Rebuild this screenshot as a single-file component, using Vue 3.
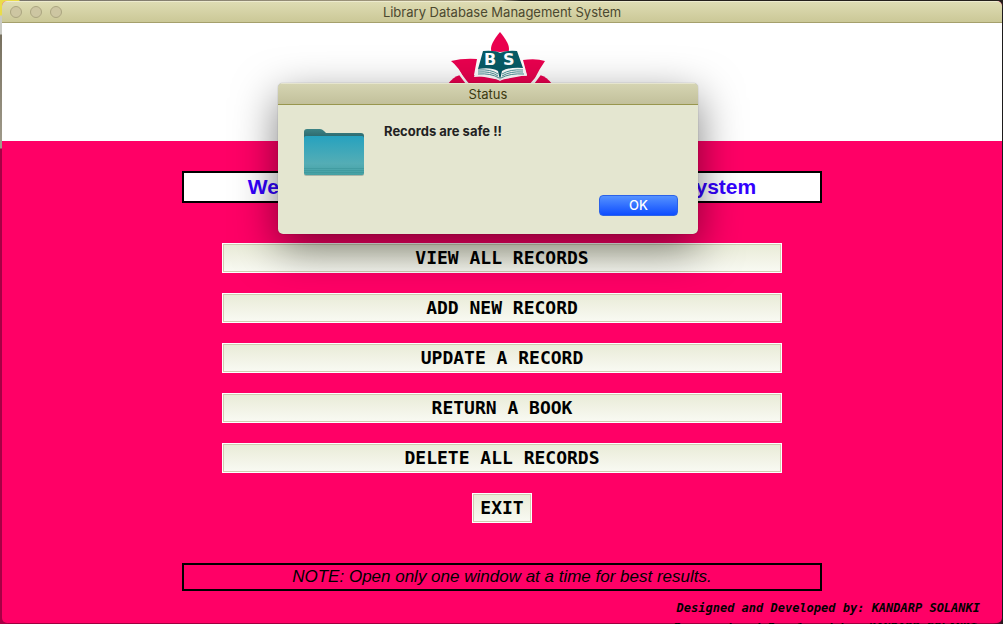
<script setup>
import { ref } from 'vue'

const open = ref(true)
const actions = [
  'VIEW ALL RECORDS',
  'ADD NEW RECORD',
  'UPDATE A RECORD',
  'RETURN A BOOK',
  'DELETE ALL RECORDS',
]
</script>

<template>
  <div class="desktop">
    <div class="backdrop-credit" aria-hidden="true">Designed and Developed by: KANDARP SOLANKI</div>
    <div class="window">
      <header class="titlebar">
        <div class="lights">
          <button class="light" type="button" aria-label="Close"></button>
          <button class="light" type="button" aria-label="Minimise"></button>
          <button class="light" type="button" aria-label="Zoom"></button>
        </div>
        <span>Library Database Management System</span>
      </header>

      <div class="brand">
        <svg class="logo" viewBox="0 0 104 100" role="img" aria-label="BS logo">
          <g fill="#ea004f">
            <path d="M52 0C47 6 43 12 43 17C43 22 47 25 52 27C57 25 61 22 61 17C61 12 57 6 52 0Z" />
            <path d="M3 29Q15 26 29 27L26 43L52 48L79 43L75 28Q88 26 97 29Q92 36 87 46L80 54H24L16 47Q11 35 3 29Z" />
            <path d="M0 52Q5 45 12 43L22 55Q10 59 0 52Z" />
            <path d="M104 52Q99 45 92 43L82 55Q94 59 104 52Z" />
            <path d="M22 52Q34 46 49 48L52 55L56 48Q70 46 82 52L70 82L52 98L34 82Z" />
          </g>
          <path d="M33 18L26 45Q43 43 52 49Q62 43 79 44L71 18L52 20Z" fill="#fff" />
          <path d="M9 38L24 58M95 38L80 58" stroke="#fff" stroke-width="2.500" />
          <path d="M35 19Q47 18 52 21Q59 18 69 19L75 36Q61 35 54 39L52 48L50 39Q43 35 30 37Z" fill="#075b66" />
          <path d="M30 38Q43 37 50 42M30 40Q43 39 50 44M30 42Q43 41 51 46M75 38Q62 37 54 42M75 40Q62 39 54 44M76 42Q62 41 53 46" fill="none" stroke="#4c9298" stroke-width="1" />
          <text x="36" y="33">B</text>
          <text x="55" y="33">S</text>
        </svg>
      </div>

      <main class="content">
        <h1 class="banner">Welcome to Library Database Management System</h1>
        <nav class="menu" aria-label="Library actions">
          <button v-for="a in actions" :key="a" class="action" type="button">{{ a }}</button>
          <button class="action exit" type="button">EXIT</button>
        </nav>
        <p class="note">NOTE: Open only one window at a time for best results.</p>
        <p class="credit">Designed and Developed by: KANDARP SOLANKI</p>
      </main>
    </div>

    <section v-if="open" class="dialog" role="dialog" aria-labelledby="status-title" aria-describedby="status-text">
      <h2 id="status-title" class="dialog-title">Status</h2>
      <div class="dialog-body">
        <svg class="folder" viewBox="0 0 64 52" aria-hidden="true">
          <defs>
            <linearGradient id="front" x1="0" y1="0" x2="0" y2="1">
              <stop offset="0" stop-color="#26a2bf" />
              <stop offset=".7" stop-color="#54adb5" />
              <stop offset="1" stop-color="#45a0a3" />
            </linearGradient>
            <linearGradient id="back" x1="0" y1="0" x2="0" y2="1">
              <stop offset="0" stop-color="#3d8486" />
              <stop offset=".6" stop-color="#2e6b70" />
            </linearGradient>
          </defs>
          <rect x="2" y="12" width="60" height="37" rx="2" fill="#8b9790" opacity=".6" />
          <path d="M2 5Q2 2 5 2H18Q20 2 22 4L24 6H59Q62 6 62 9V14H2Z" fill="url(#back)" />
          <path d="M2 11Q2 9 4 9H60Q62 9 62 11V46Q62 48 60 48H4Q2 48 2 46Z" fill="url(#front)" />
          <path d="M2 41.500H62M2 43.500H62M2 45.500H62" stroke="#328e93" stroke-width="1" opacity=".4" />
        </svg>
        <div class="dialog-side">
          <p id="status-text" class="message">Records are safe !!</p>
          <button class="ok" type="button" @click="open = false">OK</button>
        </div>
      </div>
    </section>
  </div>
</template>

<style>
html,
body {
  background: #1d1b1c;
}
</style>

<style scoped>
* {
  box-sizing: border-box;
}

h1,
h2,
p {
  margin: 0;
}

.desktop {
  position: relative;
  display: flex;
  min-height: 100vh;
  padding: 1px 1px 1px 2px;
  overflow: hidden;
  background:
    linear-gradient(90deg, #e9dc4a 19px, #77736a 20px, #aaa080 50%, #24201c 52%) 0 0 / 100% 8px no-repeat,
    linear-gradient(180deg, #e9dc4a 15px, #c9cac4 16px, #c9cac4 34px, #77705f 35px, #a19c8c 148px, #a70045 149px) 0 0 / 8px 100% no-repeat,
    linear-gradient(90deg, #9d0040 99%, #1d1b1c) 0 100% / 100% 8px no-repeat,
    #1d1b1c;
}

.backdrop-credit {
  position: absolute;
  right: 26px;
  bottom: -10px;
  font: italic bold 12px/14px "DejaVu Sans Mono", monospace;
  color: #000;
}

.window {
  position: relative;
  flex: 1;
  display: flex;
  flex-direction: column;
  border-radius: 5px;
  overflow: hidden;
  background: #ff0066;
}

.titlebar {
  position: relative;
  display: flex;
  align-items: center;
  justify-content: center;
  height: 22px;
  border-top: 1px solid #edebcf;
  border-bottom: 1px solid #a5a06c;
  background: linear-gradient(#dedcb3, #cbc897);
  font: 13px/20px Inter, sans-serif;
  color: #4b482f;
}

.lights {
  position: absolute;
  left: 8px;
  display: flex;
  gap: 8px;
}

.light {
  width: 12px;
  height: 12px;
  padding: 0;
  border: 1px solid #aba580;
  border-radius: 50%;
  background: #cdc6a2;
}

.brand {
  display: flex;
  justify-content: center;
  height: 118px;
  padding: 9px 4px 0 0;
  background: #fff;
}

.logo {
  width: 104px;
  height: 100px;
}

.logo text {
  font: bold 16px "DejaVu Sans", sans-serif;
  fill: #fff;
}

.content {
  flex: 1;
  display: flex;
  flex-direction: column;
  align-items: center;
  padding-top: 30px;
}

.banner {
  width: 64%;
  border: 2px solid #000;
  background: #fff;
  font: bold 21px/28px "Liberation Sans", Arial, sans-serif;
  color: #3300ff;
  text-align: center;
}

.menu {
  display: flex;
  flex-direction: column;
  align-items: center;
  gap: 20px;
  width: 56%;
  margin: 40px 0;
}

.action {
  width: 100%;
  height: 30px;
  padding: 0;
  border: 1px solid #fff;
  outline: 1px solid #cfceb0;
  outline-offset: -2px;
  background: linear-gradient(#e9ebd7, #f9faf3);
  font: bold 18px/28px "DejaVu Sans Mono", monospace;
  color: #000;
}

.exit {
  width: 60px;
}

.note {
  width: 64%;
  border: 2px solid #000;
  font: italic 17px/24px "Liberation Sans", Arial, sans-serif;
  color: #000;
  text-align: center;
}

.credit {
  align-self: flex-end;
  margin: 10px 22px 8px 0;
  font: italic bold 12px/14px "DejaVu Sans Mono", monospace;
  color: #000;
}

.dialog {
  position: absolute;
  top: 83px;
  left: 278px;
  width: 420px;
  border-radius: 5px;
  overflow: hidden;
  background: #e4e6d0;
  box-shadow: 0 0 1px rgba(0, 0, 0, 0.5), 0 14px 44px rgba(0, 0, 0, 0.5);
}

.dialog-title {
  height: 22px;
  border-top: 1px solid #e6e5cf;
  border-bottom: 1px solid #98964d;
  background: linear-gradient(#d5d4b2, #c2c09b);
  font: 13px/21px Inter, sans-serif;
  color: #3c3a10;
  text-align: center;
}

.dialog-body {
  display: flex;
  gap: 18px;
  padding: 18px 20px 18px 24px;
}

.folder {
  width: 64px;
  height: 52px;
  margin-top: 4px;
}

.dialog-side {
  flex: 1;
  display: flex;
  flex-direction: column;
  gap: 56px;
}

.message {
  font: bold 13px/16px Inter, sans-serif;
  color: #222;
}

.ok {
  align-self: flex-end;
  width: 79px;
  height: 21px;
  padding: 0;
  border: 1px solid #2b62e8;
  border-radius: 4px;
  background: linear-gradient(#5592ff, #0e4dff);
  font: 500 13px/19px Inter, sans-serif;
  color: #fff;
}
</style>
